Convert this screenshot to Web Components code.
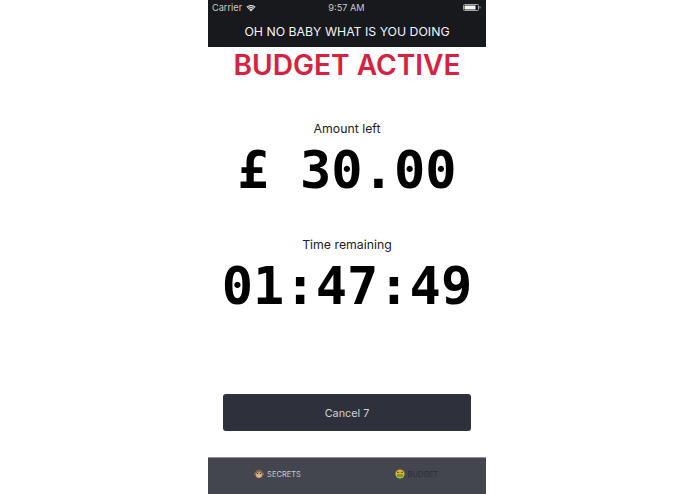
<!DOCTYPE html>
<html>
<head>
<meta charset="utf-8">
<title>Budget</title>
<style>
  html, body { margin: 0; height: 100%; background: #fff; }
  body { display: flex; justify-content: center; padding-right: 1px; box-sizing: border-box; font-family: Inter, "Liberation Sans", sans-serif; }
</style>
</head>
<body>
<budget-app>
  <status-bar slot="status" carrier="Carrier" time="9:57 AM"></status-bar>
  <nav-bar slot="nav">OH NO BABY WHAT IS YOU DOING</nav-bar>
  <budget-panel>
    <readout-block label="Amount left" value="£ 30.00"></readout-block>
    <readout-block label="Time remaining" value="01:47:49"></readout-block>
  </budget-panel>
  <tab-bar slot="tabs">
    <tab-item>
      <svg slot="icon" width="10" height="10" viewBox="0 0 10 10">
        <circle cx="1.2" cy="5" r="1.1" fill="#b98a5c"/>
        <circle cx="8.8" cy="5" r="1.1" fill="#b98a5c"/>
        <circle cx="5" cy="5" r="4.2" fill="#8a6a48"/>
        <ellipse cx="5" cy="6" rx="3" ry="2.8" fill="#d8b48a"/>
        <circle cx="3.6" cy="4.6" r=".7" fill="#3a2a1c"/>
        <circle cx="6.4" cy="4.6" r=".7" fill="#3a2a1c"/>
      </svg>
      SECRETS
    </tab-item>
    <tab-item active>
      <svg slot="icon" width="10" height="10" viewBox="0 0 10 10">
        <circle cx="5" cy="5" r="4.6" fill="#e8b32e"/>
        <rect x="1.6" y="5" width="6.8" height="3.2" rx="1.4" fill="#5fa83c"/>
        <rect x="2" y="2.8" width="2.2" height="1" fill="#5b4312"/>
        <rect x="5.8" y="2.8" width="2.2" height="1" fill="#5b4312"/>
      </svg>
      BUDGET
    </tab-item>
  </tab-bar>
</budget-app>

<script>
class BudgetApp extends HTMLElement {
  constructor() {
    super();
    this.attachShadow({ mode: 'open' }).innerHTML = `
      <style>
        :host { display: flex; flex-direction: column; width: 278px; height: 494px; background: #fff; }
        main { flex: 1; display: flex; flex-direction: column; min-height: 0; }
      </style>
      <slot name="status"></slot>
      <slot name="nav"></slot>
      <main><slot></slot></main>
      <slot name="tabs"></slot>
    `;
  }
}

class StatusBar extends HTMLElement {
  constructor() {
    super();
    this.attachShadow({ mode: 'open' }).innerHTML = `
      <style>
        :host { display: grid; grid-template-columns: 1fr auto 1fr; align-items: center; height: 15px; padding: 0 5px 0 4px; background: #18191d; color: #c9c9cb; font-size: 9.2px; }
        .left { display: flex; align-items: center; gap: 4px; }
        .right { display: flex; justify-content: flex-end; }
      </style>
      <div class="left">
        <span>${this.getAttribute('carrier')}</span>
        <svg width="10" height="8" viewBox="0 0 10 8">
          <path d="M5 7.6 L.4 2.8 C3 .4 7 .4 9.6 2.8 Z" fill="#d6d6d8"/>
          <path d="M1.9 3.6 C3.6 2.2 6.4 2.2 8.1 3.6 M3.2 5 C4.2 4.2 5.8 4.2 6.8 5" stroke="#18191d" stroke-width=".7" fill="none"/>
        </svg>
      </div>
      <span>${this.getAttribute('time')}</span>
      <div class="right">
        <svg width="18" height="7" viewBox="0 0 18 7">
          <rect x=".5" y=".5" width="15" height="6" rx="1" fill="none" stroke="#a5a5a7"/>
          <rect x="1.5" y="1.5" width="11" height="4" fill="#f4f4f4"/>
          <rect x="16.5" y="2.5" width="1" height="2" fill="#a5a5a7"/>
        </svg>
      </div>
    `;
  }
}

class NavBar extends HTMLElement {
  constructor() {
    super();
    this.attachShadow({ mode: 'open' }).innerHTML = `
      <style>
        :host { display: flex; justify-content: center; align-items: center; height: 32px; background: #18191d; color: #f4f4f5; font-size: 12.3px; font-weight: 400; }
      </style>
      <slot></slot>
    `;
  }
}

class BudgetPanel extends HTMLElement {
  constructor() {
    super();
    this.attachShadow({ mode: 'open' }).innerHTML = `
      <style>
        :host { flex: 1; display: flex; flex-direction: column; align-items: center; }
        h1 { margin: 0; height: 37px; line-height: 36px; font-size: 28.1px; font-weight: 600; color: #d6213f; }
        .readouts { display: flex; flex-direction: column; gap: 37px; margin-top: 37px; }
        button { margin-top: auto; margin-bottom: 26px; padding: 1px 0 0; width: 248px; height: 37px; border: 0; border-radius: 3px; background: #2e303b; color: #d2d3d8; font: inherit; font-size: 10.8px; }
      </style>
      <h1>BUDGET ACTIVE</h1>
      <div class="readouts"><slot></slot></div>
      <button>Cancel 7</button>
    `;
  }
}

class ReadoutBlock extends HTMLElement {
  constructor() {
    super();
    this.attachShadow({ mode: 'open' }).innerHTML = `
      <style>
        :host { display: flex; flex-direction: column; align-items: center; color: #000; }
        .label { font-size: 12.3px; line-height: 16px; color: #222; }
        .value { font-family: "DejaVu Sans Mono", "Liberation Mono", monospace; font-weight: 700; font-size: 52px; line-height: 60px; margin-top: 3px; }
      </style>
      <div class="label">${this.getAttribute('label')}</div>
      <div class="value">${this.getAttribute('value')}</div>
    `;
  }
}

class TabBar extends HTMLElement {
  constructor() {
    super();
    this.attachShadow({ mode: 'open' }).innerHTML = `
      <style>
        :host { display: grid; grid-template-columns: 1fr 1fr; box-sizing: border-box; height: 37px; padding-bottom: 4px; background: #44464f; border-top: 1px solid #8f9096; }
      </style>
      <slot></slot>
    `;
  }
}

class TabItem extends HTMLElement {
  constructor() {
    super();
    this.attachShadow({ mode: 'open' }).innerHTML = `
      <style>
        :host { display: flex; justify-content: center; align-items: center; gap: 3px; font-size: 7.5px; color: #c9cad0; }
        :host([active]) { color: #2a2c35; }
        ::slotted(svg) { display: block; }
      </style>
      <slot name="icon"></slot>
      <slot></slot>
    `;
  }
}

customElements.define('budget-app', BudgetApp);
customElements.define('status-bar', StatusBar);
customElements.define('nav-bar', NavBar);
customElements.define('budget-panel', BudgetPanel);
customElements.define('readout-block', ReadoutBlock);
customElements.define('tab-bar', TabBar);
customElements.define('tab-item', TabItem);
</script>
</body>
</html>
